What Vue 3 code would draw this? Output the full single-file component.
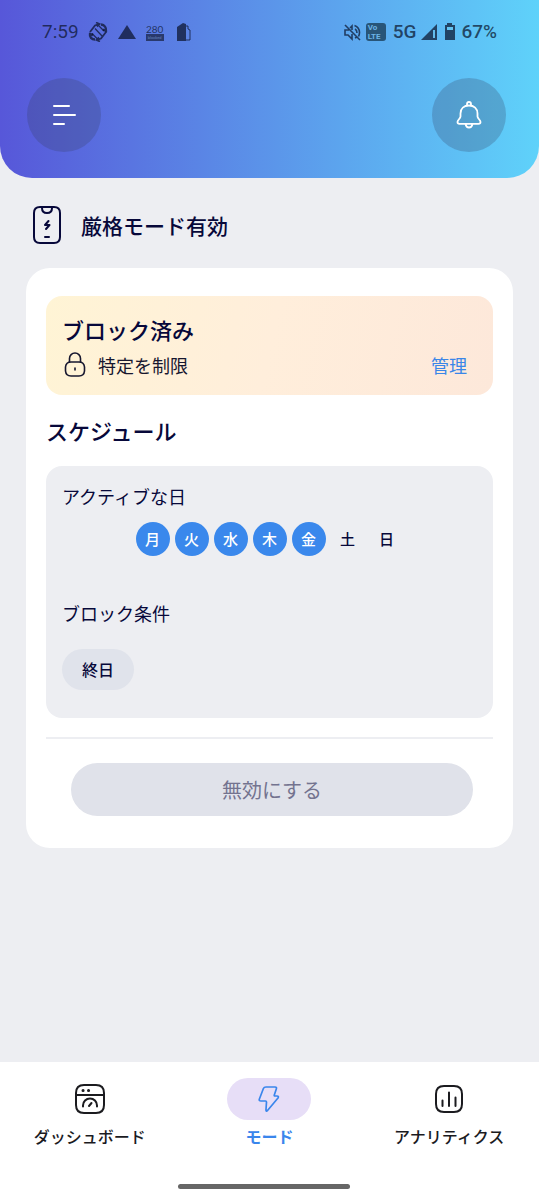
<script setup>
import { ref } from 'vue'

const days = ref([
  { label: '月', active: true },
  { label: '火', active: true },
  { label: '水', active: true },
  { label: '木', active: true },
  { label: '金', active: true },
  { label: '土', active: false },
  { label: '日', active: false },
])
</script>

<template>
  <div class="page">
    <header class="header">
      <div class="status">
        <div class="status-group">
          <span class="clock">7:59</span>
          <svg width="20" height="20" viewBox="0 0 20 20" fill="none" stroke="currentColor">
            <path d="M2 10 7 3.500 11 2M8 .5 11.500 2 9 4.500M18 10l-5 6.500L9 18M12 19.500 8.500 18 11 15.500" stroke-width="1.8" />
            <path d="M13 2.500c3.500.5 5.500 3 5 6.500l-3-1.500M7 17.500c-3.500 0-5.500-2.500-5-5.500l3 1" stroke-width="2.400" />
            <path d="M7 6.500l7 7.500M4 11.500l5 5M11 4l5 5" stroke-width="1.300" />
          </svg>
          <svg width="20" height="14" viewBox="0 0 20 14" fill="currentColor"><path d="M10 0 19 14H1z" /></svg>
          <span class="counter"><span class="counter-num">280</span><span class="counter-box">blocked</span></span>
          <svg class="building" width="14" height="18" viewBox="0 0 14 18" fill="currentColor">
            <path d="M0 4 6 0l3 1v17H0z" />
            <path d="M9 3h2v3l2 1v10H9" fill="none" stroke="currentColor" />
          </svg>
        </div>
        <div class="status-group right">
          <svg width="17" height="17" viewBox="0 0 17 17" fill="none" stroke="currentColor" stroke-width="1.6">
            <path d="M1 1l15 15M5 6H1v5h3l4 4v-5M6 4l2-2v4M11 5q2 1 2 4M10.500 1.500q5 2 5 7 0 2-1 4M11 14l2-1" />
          </svg>
          <span class="volte"><span>Vo</span><span>LTE</span></span>
          <span class="network">5G</span>
          <svg class="signal" width="16" height="16" viewBox="0 0 16 16"><path d="M16 0v16H0z" fill="currentColor" /><path d="M13 6v8" stroke="#63bdec" stroke-width="2" /></svg>
          <svg width="12" height="18" viewBox="0 0 12 18"><path d="M3 0h5v2h3v15H1V2h2z" fill="currentColor" /><path d="M3 4h6v3H3z" fill="#62c4f2" /></svg>
          <span class="percent">67%</span>
        </div>
      </div>
      <div class="actions">
        <button class="round" type="button" aria-label="メニュー">
          <svg width="26" height="24" viewBox="0 0 26 24" fill="none" stroke="currentColor" stroke-width="2" stroke-linecap="round"><path d="M3 3h15M3 12h21M3 21h10" /></svg>
        </button>
        <button class="round" type="button" aria-label="通知">
          <svg width="26" height="28" viewBox="0 0 26 28" fill="none" stroke="currentColor" stroke-width="1.8" stroke-linecap="round" stroke-linejoin="round">
            <path d="M11 4.500V3q0-2 2-2t2 2v1.500M13 4.500c-5 0-8.500 3-8.500 8v3c0 2-3 3.500-3 5.500 0 1 .7 1.800 2 1.800h19c1.300 0 2-.8 2-1.800 0-2-3-3.500-3-5.500v-3c0-5-3.500-8-8.500-8zM9.500 23c.5 2.500 2 3.500 3.500 3.500s3-1 3.500-3.500" />
          </svg>
        </button>
      </div>
    </header>

    <main class="main">
      <h1 class="heading">
        <svg width="28" height="38" viewBox="0 0 28 38" fill="none" stroke="currentColor" stroke-width="2" stroke-linecap="round" stroke-linejoin="round">
          <path d="M7 1h14q6 0 6 6v24q0 6-6 6H7q-6 0-6-6V7q0-6 6-6z" />
          <path d="M9 1v1q0 5 5 5t5-5V1M12 31h4" />
          <path d="M15.500 15 12 19h4.500L13 23" />
        </svg>
        <span>厳格モード有効</span>
      </h1>

      <section class="card">
        <div class="banner">
          <h2 class="title">ブロック済み</h2>
          <div class="banner-row">
            <svg width="22" height="26" viewBox="0 0 22 26" fill="none" stroke="currentColor" stroke-width="1.6" stroke-linecap="round">
              <path d="M5.500 10V6.500a5.500 5.500 0 0 1 11 0V10" />
              <path d="M7 10h8q5 0 5.500 5v4q-.5 5-5.500 5H7q-5 0-5.500-5v-4Q2 10 7 10zM11 16v2" />
            </svg>
            <span>特定を制限</span>
            <button class="manage" type="button">管理</button>
          </div>
        </div>

        <h2 class="title schedule">スケジュール</h2>
        <div class="panel">
          <h3 class="label">アクティブな日</h3>
          <div class="days">
            <button
              v-for="day in days"
              :key="day.label"
              type="button"
              class="day"
              :class="{ on: day.active }"
              :aria-pressed="day.active"
              @click="day.active = !day.active"
            >{{ day.label }}</button>
          </div>
          <h3 class="label">ブロック条件</h3>
          <button class="chip" type="button">終日</button>
        </div>

        <div class="footer">
          <button class="disable" type="button">無効にする</button>
        </div>
      </section>
    </main>

    <nav class="nav">
      <div class="tabs">
        <a class="tab" href="#dashboard">
          <span class="tab-icon">
            <svg width="30" height="30" viewBox="0 0 30 30" fill="none" stroke="currentColor" stroke-width="2" stroke-linecap="round">
              <path d="M9 1h12q8 0 8 8v12q0 8-8 8H9q-8 0-8-8V9q0-8 8-8zM1 11h28" />
              <path d="M8 6.500h.1M13.500 6.500h.1" stroke-width="3" />
              <path d="M8 22.500v-1a7 7 0 0 1 14 0v1M14 22l2.500-3" />
            </svg>
          </span>
          <span>ダッシュボード</span>
        </a>
        <a class="tab current" href="#mode" aria-current="page">
          <span class="tab-icon">
            <svg width="22" height="26" viewBox="0 0 22 26" fill="none" stroke="currentColor" stroke-width="1.7" stroke-linejoin="round">
              <path d="M8 1h9q2 0 1.300 2l-2 6q-.3 1 .7 1h2q2 0 1 2L9.500 24.500q-1.700 1.500-1.500-1L8.500 16q0-1-1-1H3q-2.300 0-1.600-2l4-10.500Q6 1 8 1z" />
            </svg>
          </span>
          <span>モード</span>
        </a>
        <a class="tab" href="#analytics">
          <span class="tab-icon">
            <svg width="28" height="28" viewBox="0 0 28 28" fill="none" stroke="currentColor" stroke-width="2" stroke-linecap="round">
              <path d="M9 1h10q8 0 8 8v10q0 8-8 8H9q-8 0-8-8V9q0-8 8-8zM7.500 15.500V21M14 7.500V21M20.500 12.500V21" />
            </svg>
          </span>
          <span>アナリティクス</span>
        </a>
      </div>
      <div class="home-bar"></div>
    </nav>
  </div>
</template>

<style>
body {
  margin: 0;
  background: #edeef2;
}
</style>

<style scoped>
.page {
  min-height: 100vh;
  display: flex;
  flex-direction: column;
  background: #edeef2;
  color: #07083a;
  font-family: "Noto Sans CJK JP", sans-serif;
}
button {
  border: 0;
  padding: 0;
  background: none;
  font-family: inherit;
  color: inherit;
  cursor: pointer;
}
h1, h2, h3 {
  margin: 0;
  font-weight: 500;
}
svg {
  display: block;
  flex: none;
}
.header {
  padding: 20px 33px 26px 27px;
  border-radius: 0 0 32px 32px;
  background: linear-gradient(90deg, #5757d9, #5fd2fa);
}
.status {
  display: flex;
  justify-content: space-between;
  height: 24px;
  padding: 0 9px 0 15px;
  color: rgba(8, 16, 38, 0.7);
  font: 19px/24px Roboto, sans-serif;
}
.status-group {
  display: flex;
  align-items: center;
  gap: 9px;
}
.right {
  gap: 5px;
}
.counter {
  display: flex;
  flex-direction: column;
  align-items: center;
  width: 18px;
}
.counter-num {
  font: 10px/10px Lato, sans-serif;
}
.counter-box {
  width: 18px;
  background: #29396d;
  color: #6785bd;
  text-align: center;
  font: 4px/7px Roboto, sans-serif;
}
.building {
  margin-left: 4px;
}
.volte {
  display: flex;
  flex-direction: column;
  width: 18px;
  height: 18px;
  padding-left: 2px;
  border-radius: 3px;
  background: #285578;
  color: #6cb4e6;
  font: 700 8px/9px Roboto, sans-serif;
}
.network {
  margin-left: 2px;
}
.network,
.percent {
  font-weight: 500;
}
.signal {
  margin-right: 2px;
}
.actions {
  display: flex;
  justify-content: space-between;
  margin-top: 34px;
}
.round {
  display: grid;
  place-items: center;
  width: 74px;
  height: 74px;
  border-radius: 50%;
  background: rgba(50, 60, 90, 0.25);
  color: #fff;
}
.main {
  padding: 27px 26px;
}
.heading {
  display: flex;
  align-items: center;
  gap: 20px;
  padding-left: 7px;
  font-size: 21px;
  line-height: 40px;
}
.card {
  margin-top: 23px;
  padding: 28px 20px 32px;
  border-radius: 24px;
  background: #fff;
}
.banner {
  padding: 15px 26px 12px 16px;
  border-radius: 16px;
  background: linear-gradient(102deg, #fff4d5, #ffeedb 50%, #fde8da);
}
.title {
  font-size: 22px;
  line-height: 36px;
}
.banner-row {
  display: flex;
  align-items: center;
  gap: 12px;
  padding-left: 2px;
  font-size: 18px;
  line-height: 36px;
  color: #17172f;
}
.manage {
  margin-left: auto;
  color: #3a86e8;
  font-size: 18px;
  line-height: 36px;
}
.schedule {
  margin: 17px 0 18px;
}
.panel {
  padding: 15px 16px 28px;
  border-radius: 16px;
  background: #edeef2;
}
.label {
  font-size: 18px;
  font-weight: 400;
  line-height: 30px;
}
.days {
  display: flex;
  justify-content: center;
  gap: 5px;
  margin: 11px 0 42px;
}
.day {
  width: 34px;
  height: 34px;
  border-radius: 50%;
  font-size: 15px;
  font-weight: 500;
  line-height: 34px;
}
.day.on {
  background: #3a88ec;
  color: #fff;
}
.chip {
  display: block;
  margin-top: 21px;
  padding: 0 20px;
  border-radius: 21px;
  background: #e0e3eb;
  font-size: 16px;
  font-weight: 500;
  line-height: 41px;
}
.footer {
  margin-top: 19px;
  padding: 24px 20px 0 25px;
  border-top: 2px solid #edeef2;
}
.disable {
  display: block;
  width: 100%;
  border-radius: 27px;
  background: #e0e2ea;
  color: #73738f;
  font-size: 20px;
  line-height: 53px;
}
.nav {
  margin-top: auto;
  padding: 16px 0 11px;
  background: #fff;
}
.tabs {
  display: grid;
  grid-template-columns: repeat(3, 1fr);
}
.tab {
  display: flex;
  flex-direction: column;
  align-items: center;
  gap: 4px;
  color: #1b1b1f;
  font-size: 16px;
  font-weight: 500;
  line-height: 24px;
  text-decoration: none;
}
.tab-icon {
  display: grid;
  place-items: center;
  width: 84px;
  height: 42px;
  border-radius: 21px;
}
.current {
  color: #3a86ec;
  font-weight: 700;
}
.current .tab-icon {
  background: #e7def7;
}
.home-bar {
  width: 32%;
  height: 5px;
  margin: 36px 0 0 33%;
  border-radius: 3px;
  background: #666;
}
</style>
